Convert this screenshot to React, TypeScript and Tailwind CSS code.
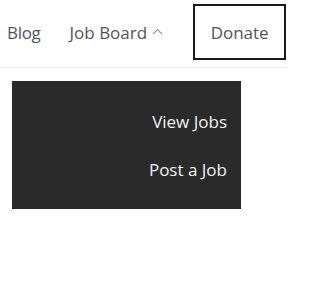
export default function App() {
  return (
    <div className="w-[288px] h-[288px] bg-white overflow-hidden" style={{ fontFamily: '"Open Sans", "Noto Sans", sans-serif' }}>
      <header className="h-[68px] border-b border-[#f0f0f0] flex items-start">
        <nav className="flex items-center h-[56px] mt-[4px] pl-[7px] text-[17px] text-[#555]">
          <a className="leading-none tracking-[-0.3px]">Blog</a>
          <a className="ml-[29px] flex items-center leading-none">
            Job Board
            <svg className="ml-[5px] mt-[-2px]" width="11" height="7" viewBox="0 0 11 7" fill="none" stroke="#999" strokeWidth="1.2">
              <path d="M1 6 L5.5 1.5 L10 6" />
            </svg>
          </a>
          <a className="ml-[30px] w-[93px] h-[56px] border-2 border-[#1a1a1a] flex items-center justify-center leading-none">
            Donate
          </a>
        </nav>
      </header>
      <div className="ml-[12px] mt-[13px] w-[229px] h-[128px] bg-[#2a2a2a] flex flex-col items-end pr-[14px] pt-[29px] gap-[25px] text-[17px] text-[#f2f2f2]">
        <a className="leading-[23px]">View Jobs</a>
        <a className="leading-[23px]">Post a Job</a>
      </div>
    </div>
  );
}
